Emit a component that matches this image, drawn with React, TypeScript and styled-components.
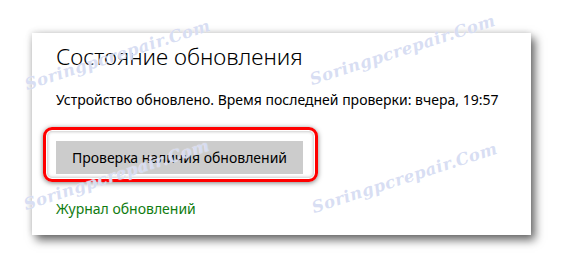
import React from "react";
import styled, { createGlobalStyle } from "styled-components";

const Global = createGlobalStyle`
  html, body { margin: 0; padding: 0; background: #ffffff; }
  body { font-family: "Noto Sans", "Open Sans", sans-serif; }
`;

const Page = styled.div`
  position: relative;
  width: 563px;
  height: 267px;
  overflow: hidden;
  background: #ffffff;
  padding: 33px 0 0 32px;
  box-sizing: border-box;
`;

const Card = styled.section`
  width: 499px;
  height: 202px;
  box-sizing: border-box;
  background: #ffffff;
  padding: 10px 24px 0 24px;
  display: flex;
  flex-direction: column;
  box-shadow: 4px 5px 9px rgba(0, 0, 0, 0.6), -1px -1px 6px rgba(0, 0, 0, 0.12);
`;

const Title = styled.h2`
  margin: 0;
  font-family: "Noto Sans", sans-serif;
  font-weight: 300;
  font-size: 22.5px;
  line-height: 28px;
  color: #000000;
`;

const Status = styled.p`
  margin: 20px 0 0 0;
  font-size: 14px;
  line-height: 18px;
  color: #000000;
`;

const Highlight = styled.div`
  align-self: flex-start;
  margin: 18px 0 0 -13px;
  padding: 11px 12px 5px 10px;
  border: 3px solid #ff0000;
  border-radius: 9px;
  box-shadow: 0 1px 5px rgba(0, 0, 0, 0.5), inset 0 0 0 1px #ffffff,
    inset 0 0 3px 2px rgba(0, 0, 0, 0.2);
`;

const Button = styled.button`
  display: block;
  width: 247px;
  height: 33px;
  border: none;
  background: #cccccc;
  font-family: "Noto Sans", sans-serif;
  font-size: 14px;
  color: #000000;
  padding: 0;
`;

const Link = styled.a`
  margin-top: 18px;
  font-size: 14px;
  line-height: 18px;
  color: #107c10;
  text-decoration: none;
`;

const Watermark = styled.span<{ $x: number; $y: number }>`
  position: absolute;
  left: ${(p) => p.$x}px;
  top: ${(p) => p.$y}px;
  transform: rotate(-18deg);
  transform-origin: left bottom;
  font-family: "DejaVu Serif", serif;
  font-style: italic;
  font-weight: bold;
  font-size: 16.5px;
  line-height: 1;
  letter-spacing: 0.5px;
  color: rgba(190, 200, 235, 0.6);
  text-shadow: 0 0 1px #ffffff;
  white-space: nowrap;
  pointer-events: none;
`;

const marks = [
  { x: 28, y: 77 },
  { x: 313, y: 72 },
  { x: 27, y: 197 },
  { x: 315, y: 200 },
];

export default function App() {
  return (
    <>
      <Global />
      <Page>
        <Card>
          <Title>Состояние обновления</Title>
          <Status>Устройство обновлено. Время последней проверки: вчера, 19:57</Status>
          <Highlight>
            <Button>Проверка наличия обновлений</Button>
          </Highlight>
          <Link href="#">Журнал обновлений</Link>
        </Card>
        {marks.map((m, i) => (
          <Watermark key={i} $x={m.x} $y={m.y}>
            Soringpcrepair.Com
          </Watermark>
        ))}
      </Page>
    </>
  );
}
